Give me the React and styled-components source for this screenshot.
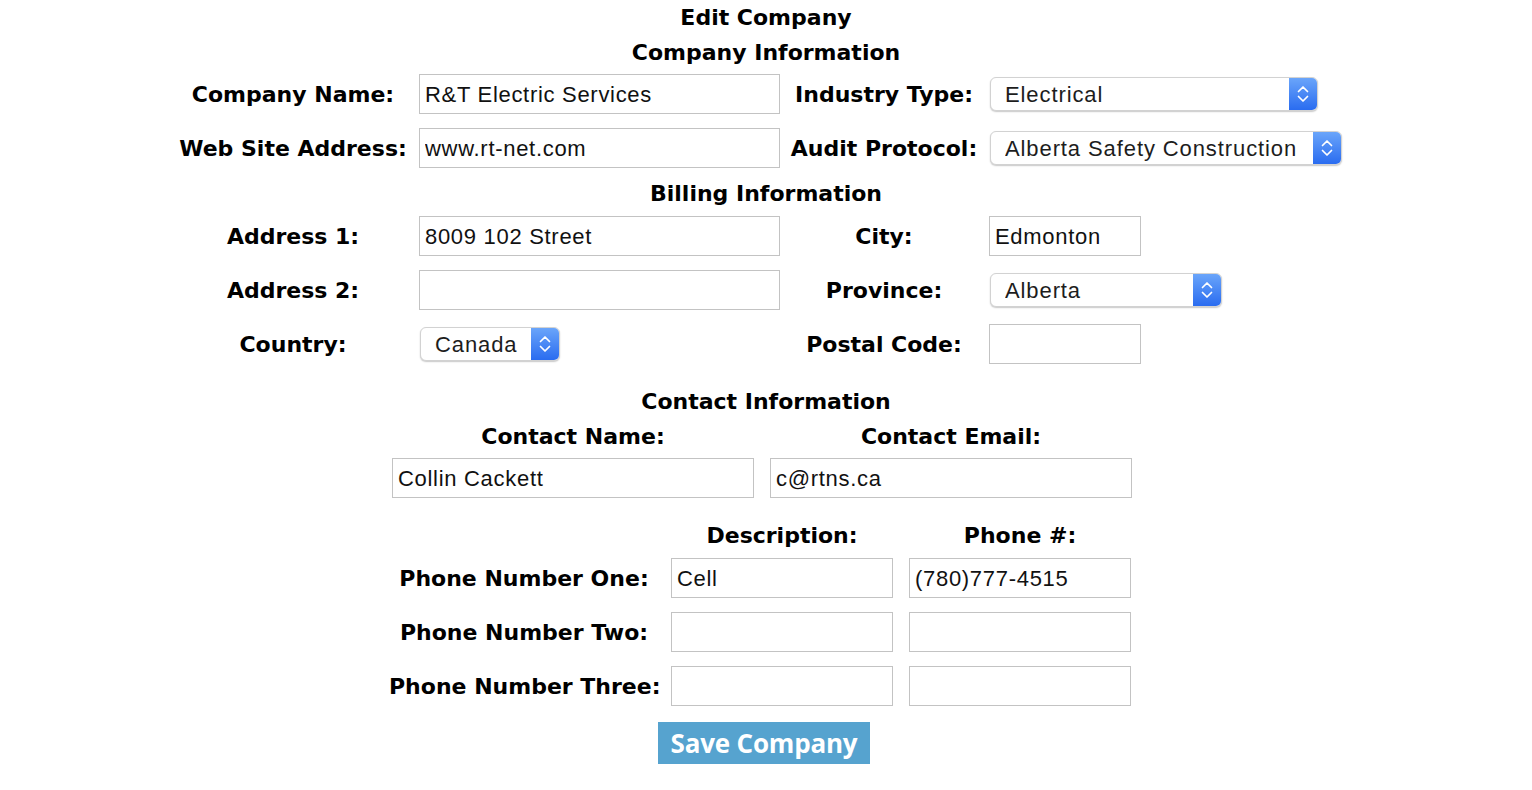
import React from "react";
import styled, { createGlobalStyle } from "styled-components";

const GlobalStyle = createGlobalStyle`
  body {
    margin: 0;
    background: #ffffff;
    color: #000000;
    font-family: "DejaVu Sans", Verdana, sans-serif;
  }
`;

const Page = styled.div`
  width: 1532px;
  padding-top: 1px;
`;

const Heading = styled.h2`
  margin: 0;
  margin-top: ${(props) => props.gap || 0}px;
  height: 34px;
  line-height: 34px;
  font-size: 22px;
  font-weight: 700;
  text-align: center;
  white-space: nowrap;
`;

const TopGrid = styled.div`
  display: grid;
  grid-template-columns: 246px 368px 200px 378px;
  grid-template-rows: 32px 54px 54px 34px 54px 54px 54px;
  width: 1192px;
  margin: 0 auto;
  align-items: center;
`;

const SpanHeading = styled(Heading)`
  grid-column: 1 / -1;
  height: auto;
  padding-top: 3px;
  line-height: 30px;
`;

const Label = styled.label`
  display: block;
  padding-left: ${(props) => props.shift || 0}px;
  font-size: 22px;
  font-weight: 700;
  text-align: center;
  white-space: nowrap;
`;

const Cell = styled.div`
  display: flex;
  align-items: center;
  padding-left: ${(props) => props.indent || 0}px;
`;

const TextInput = styled.input`
  box-sizing: border-box;
  width: ${(props) => props.w}px;
  height: 40px;
  margin: 0;
  padding: 1px 5px 0;
  border: 1px solid #c3c3c3;
  border-radius: 0;
  background: #fff;
  color: #111;
  font-family: "Liberation Sans", Arial, sans-serif;
  font-size: 22px;
  letter-spacing: 0.7px;
  outline: none;
`;

const SelectWrap = styled.div`
  display: inline-flex;
  box-sizing: border-box;
  width: ${(props) => props.w}px;
  height: 34px;
  border: 1px solid #d2d2d2;
  border-radius: 6px;
  overflow: hidden;
  background: #fff;
  box-shadow: 0 1px 1.5px rgba(0, 0, 0, 0.22);
`;

const NativeSelect = styled.select`
  flex: 1;
  min-width: 0;
  margin: 0;
  padding: 0 0 0 14px;
  border: none;
  background: transparent;
  appearance: none;
  -webkit-appearance: none;
  color: #1d1d1d;
  font-family: "Liberation Sans", Arial, sans-serif;
  font-size: 22px;
  letter-spacing: 0.9px;
  outline: none;
`;

const Cap = styled.span`
  display: flex;
  align-items: center;
  justify-content: center;
  width: 28px;
  background: linear-gradient(#6aa5fa, #2a6cf0);
`;

const ContactGrid = styled.div`
  display: grid;
  grid-template-columns: 362px 362px;
  grid-template-rows: 34px 40px;
  column-gap: 16px;
  row-gap: 5px;
  margin-left: calc(50% - 374px);
  align-items: center;
`;

const PhoneGrid = styled.div`
  display: grid;
  grid-template-columns: 268px 222px 222px;
  grid-template-rows: 32px 54px 54px 54px;
  column-gap: 16px;
  margin-top: 21px;
  margin-left: calc(50% - 379px);
  align-items: center;
`;

const ButtonRow = styled.div`
  display: flex;
  justify-content: center;
  padding-top: 9px;
  padding-right: 4px;
`;

const SaveButton = styled.button`
  width: 212px;
  height: 42px;
  border: none;
  background: #56a3cf;
  color: #ffffff;
  font-family: "Open Sans", sans-serif;
  font-size: 26px;
  font-weight: 700;
  letter-spacing: -0.2px;
  cursor: pointer;
`;

const Chevrons = () => (
  <svg width="14" height="22" viewBox="0 0 14 22" fill="none">
    <path d="M2.5 8.5 L7 4 L11.5 8.5" stroke="#fff" strokeWidth="1.7" strokeLinecap="round" strokeLinejoin="round" />
    <path d="M2.5 13.5 L7 18 L11.5 13.5" stroke="#fff" strokeWidth="1.7" strokeLinecap="round" strokeLinejoin="round" />
  </svg>
);

const Select = ({ w, value, options }) => (
  <SelectWrap w={w}>
    <NativeSelect defaultValue={value}>
      {options.map((o) => (
        <option key={o}>{o}</option>
      ))}
    </NativeSelect>
    <Cap>
      <Chevrons />
    </Cap>
  </SelectWrap>
);

export default function App() {
  return (
    <Page>
      <GlobalStyle />
      <Heading>Edit Company</Heading>
      <TopGrid>
        <SpanHeading>Company Information</SpanHeading>

        <Label>Company Name:</Label>
        <Cell indent={3}>
          <TextInput w={361} defaultValue="R&T Electric Services" />
        </Cell>
        <Label>Industry Type:</Label>
        <Cell indent={6}>
          <Select w={328} value="Electrical" options={["Electrical", "Mechanical", "General Contractor"]} />
        </Cell>

        <Label>Web Site Address:</Label>
        <Cell indent={3}>
          <TextInput w={361} defaultValue="www.rt-net.com" />
        </Cell>
        <Label>Audit Protocol:</Label>
        <Cell indent={6}>
          <Select w={352} value="Alberta Safety Construction" options={["Alberta Safety Construction"]} />
        </Cell>

        <SpanHeading>Billing Information</SpanHeading>

        <Label>Address 1:</Label>
        <Cell indent={3}>
          <TextInput w={361} defaultValue="8009 102 Street" />
        </Cell>
        <Label>City:</Label>
        <Cell indent={5}>
          <TextInput w={152} defaultValue="Edmonton" />
        </Cell>

        <Label>Address 2:</Label>
        <Cell indent={3}>
          <TextInput w={361} defaultValue="" />
        </Cell>
        <Label>Province:</Label>
        <Cell indent={6}>
          <Select w={232} value="Alberta" options={["Alberta", "British Columbia", "Saskatchewan"]} />
        </Cell>

        <Label>Country:</Label>
        <Cell indent={4}>
          <Select w={140} value="Canada" options={["Canada"]} />
        </Cell>
        <Label>Postal Code:</Label>
        <Cell indent={5}>
          <TextInput w={152} defaultValue="" />
        </Cell>
      </TopGrid>

      <Heading gap={14}>Contact Information</Heading>
      <ContactGrid>
        <Label>Contact Name:</Label>
        <Label>Contact Email:</Label>
        <TextInput w={362} defaultValue="Collin Cackett" />
        <TextInput w={362} defaultValue="c@rtns.ca" />
      </ContactGrid>

      <PhoneGrid>
        <span />
        <Label>Description:</Label>
        <Label>Phone #:</Label>

        <Label shift={6}>Phone Number One:</Label>
        <TextInput w={222} defaultValue="Cell" />
        <TextInput w={222} defaultValue="(780)777-4515" />

        <Label shift={6}>Phone Number Two:</Label>
        <TextInput w={222} defaultValue="" />
        <TextInput w={222} defaultValue="" />

        <Label shift={2}>Phone Number Three:</Label>
        <TextInput w={222} defaultValue="" />
        <TextInput w={222} defaultValue="" />
      </PhoneGrid>

      <ButtonRow>
        <SaveButton type="button">Save Company</SaveButton>
      </ButtonRow>
    </Page>
  );
}
